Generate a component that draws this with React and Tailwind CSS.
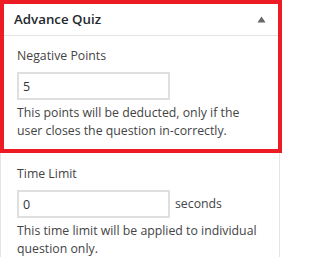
import React from "react";

const font = { fontFamily: '"Open Sans", "Noto Sans", sans-serif' };

const Field = ({ label, value, suffix, help }) => (
  <div className="flex flex-col">
    <label className="text-[12.3px] leading-[18px] text-[#444]">{label}</label>
    <div className="mt-[7px] flex items-center gap-[5px]">
      <input
        type="text"
        defaultValue={value}
        className="h-[28px] w-[153px] border-2 border-[#dfdfdf] bg-white px-[4px] text-[12.5px] text-[#333] outline-none"
      />
      {suffix && <span className="text-[12.3px] text-[#444]">{suffix}</span>}
    </div>
    <p className="mt-[4px] max-w-[246px] text-[12.3px] leading-[18px] text-[#444]">{help}</p>
  </div>
);

const App = () => {
  return (
    <div className="h-[274px] w-[282px] bg-white" style={font}>
      {/* highlighted section */}
      <div className="w-[282px] border-4 border-[#ed1c24] bg-white">
        <div className="flex h-[32px] items-center justify-between border-b border-[#e2e4e7] pl-[10px] pr-[12px]">
          <h2 className="text-[13.3px] font-semibold text-[#23282d]">Advance Quiz</h2>
          <svg width="9" height="7" viewBox="0 0 9 7">
            <path d="M4.5 0.5 L8.5 6.5 L0.5 6.5 Z" fill="#666" />
          </svg>
        </div>
        <div className="pb-[9px] pl-[13px] pr-[10px] pt-[11px]">
          <Field
            label="Negative Points"
            value="5"
            help="This points will be deducted, only if the user closes the question in-correctly."
          />
        </div>
      </div>
      <div className="h-[104px] w-[280px] border-x border-[#e5e5e5] pl-[16px] pr-[10px] pt-[12px]">
        <Field
          label="Time Limit"
          value="0"
          suffix="seconds"
          help="This time limit will be applied to individual question only."
        />
      </div>
    </div>
  );
};

export default App;
